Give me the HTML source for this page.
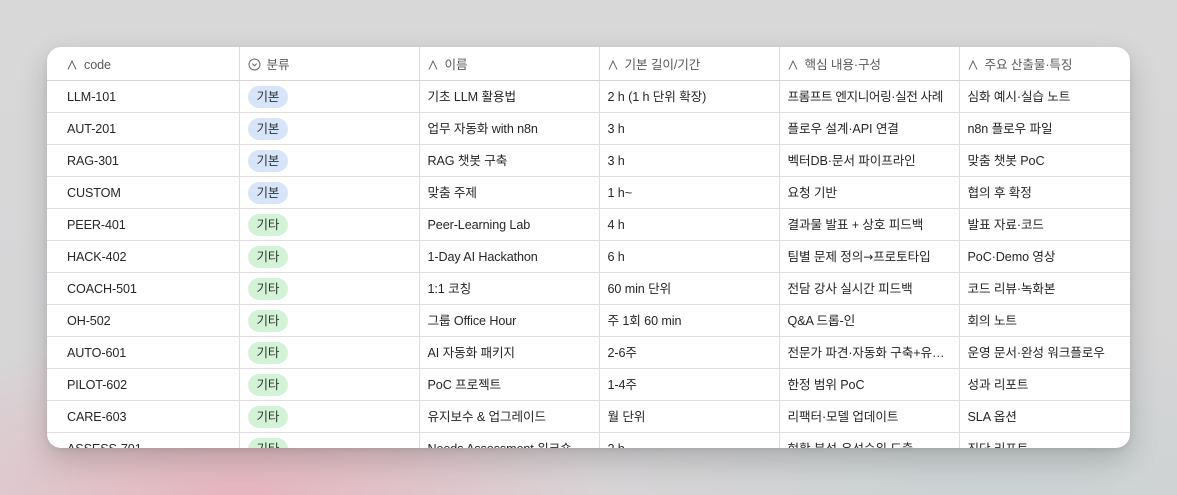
<!DOCTYPE html>
<html><head><meta charset="utf-8">
<style>
html,body{margin:0;padding:0;width:1177px;height:495px;overflow:hidden}
body{background:
 radial-gradient(ellipse 520px 260px at 240px 500px, rgba(236,170,182,.75), rgba(236,170,182,0) 70%),
 radial-gradient(ellipse 600px 260px at 1000px 495px, rgba(200,210,210,.9), rgba(200,210,210,0) 70%),
 linear-gradient(180deg,#d9d8d9 0%,#d6d6d7 60%,#d8d4d6 100%);
 font-family:"Liberation Sans","Noto Sans CJK KR",sans-serif;}
.card{position:absolute;left:47px;top:47px;width:1083px;height:401px;background:#fff;border-radius:14px;overflow:hidden;
 box-shadow:0 12px 30px rgba(0,0,0,.18),0 2px 6px rgba(0,0,0,.08)}
table{border-collapse:collapse;table-layout:fixed;width:1083px}
td,th{height:29px;line-height:29px;padding-top:2px;border-bottom:1px solid #dedede;border-right:1px solid #dedede;font-size:12.6px;color:#262626;
 white-space:nowrap;overflow:hidden;text-overflow:ellipsis;padding-right:7px;padding-left:8px;padding-bottom:0;text-align:left;font-weight:normal;letter-spacing:-0.1px}
th{height:30px;line-height:30px;padding-top:3px;color:#5a5a5a;border-bottom:1px solid #d5d5d5}
td:last-child,th:last-child{border-right:none}
td:first-child,th:first-child{padding-left:20px}
.ic{display:inline-block;vertical-align:-1px;margin-right:7px}
.pill{display:inline-block;vertical-align:middle;height:22px;line-height:22px;padding:0 9px;border-radius:11px;font-size:12.5px;color:#333;margin-top:-1px}
.b{background:#d7e5fb}.g{background:#d2f3d6}
.ar{font-family:"DejaVu Sans",sans-serif;font-size:12px}
</style></head><body>
<div class="card"><table>
<colgroup><col style="width:192px"><col style="width:180px"><col style="width:180px"><col style="width:180px"><col style="width:180px"><col style="width:171px"></colgroup>
<tr><th><svg class="ic" width="10" height="10" viewBox="0 0 10 10"><path d="M1 9.5 5 1 9 9.5" fill="none" stroke="#666" stroke-width="1"/></svg>code</th><th><svg width="13" height="13" viewBox="0 0 13 13" style="vertical-align:-2px;margin-right:6px"><circle cx="6.5" cy="6.5" r="5.5" fill="none" stroke="#666" stroke-width="1"/><path d="M4.3 5.6 6.5 7.8 8.7 5.6" fill="none" stroke="#666" stroke-width="1"/></svg>분류</th><th><svg class="ic" width="10" height="10" viewBox="0 0 10 10"><path d="M1 9.5 5 1 9 9.5" fill="none" stroke="#666" stroke-width="1"/></svg>이름</th><th><svg class="ic" width="10" height="10" viewBox="0 0 10 10"><path d="M1 9.5 5 1 9 9.5" fill="none" stroke="#666" stroke-width="1"/></svg>기본 길이/기간</th><th><svg class="ic" width="10" height="10" viewBox="0 0 10 10"><path d="M1 9.5 5 1 9 9.5" fill="none" stroke="#666" stroke-width="1"/></svg>핵심 내용·구성</th><th><svg class="ic" width="10" height="10" viewBox="0 0 10 10"><path d="M1 9.5 5 1 9 9.5" fill="none" stroke="#666" stroke-width="1"/></svg>주요 산출물·특징</th></tr>
<tr><td>LLM-101</td><td><span class="pill b">기본</span></td><td>기초 LLM 활용법</td><td>2 h (1 h 단위 확장)</td><td style="letter-spacing:-0.4px">프롬프트 엔지니어링·실전 사례</td><td>심화 예시·실습 노트</td></tr>
<tr><td>AUT-201</td><td><span class="pill b">기본</span></td><td>업무 자동화 with n8n</td><td>3 h</td><td>플로우 설계·API 연결</td><td>n8n 플로우 파일</td></tr>
<tr><td>RAG-301</td><td><span class="pill b">기본</span></td><td>RAG 챗봇 구축</td><td>3 h</td><td>벡터DB·문서 파이프라인</td><td>맞춤 챗봇 PoC</td></tr>
<tr><td>CUSTOM</td><td><span class="pill b">기본</span></td><td>맞춤 주제</td><td>1 h~</td><td>요청 기반</td><td>협의 후 확정</td></tr>
<tr><td>PEER-401</td><td><span class="pill g">기타</span></td><td>Peer-Learning Lab</td><td>4 h</td><td>결과물 발표 + 상호 피드백</td><td>발표 자료·코드</td></tr>
<tr><td>HACK-402</td><td><span class="pill g">기타</span></td><td>1-Day AI Hackathon</td><td>6 h</td><td>팀별 문제 정의<span class="ar">→</span>프로토타입</td><td>PoC·Demo 영상</td></tr>
<tr><td>COACH-501</td><td><span class="pill g">기타</span></td><td>1:1 코칭</td><td>60 min 단위</td><td>전담 강사 실시간 피드백</td><td>코드 리뷰·녹화본</td></tr>
<tr><td>OH-502</td><td><span class="pill g">기타</span></td><td>그룹 Office Hour</td><td>주 1회 60 min</td><td>Q&amp;A 드롭-인</td><td>회의 노트</td></tr>
<tr><td>AUTO-601</td><td><span class="pill g">기타</span></td><td>AI 자동화 패키지</td><td>2-6주</td><td>전문가 파견·자동화 구축+유지보수</td><td>운영 문서·완성 워크플로우</td></tr>
<tr><td>PILOT-602</td><td><span class="pill g">기타</span></td><td>PoC 프로젝트</td><td>1-4주</td><td>한정 범위 PoC</td><td>성과 리포트</td></tr>
<tr><td>CARE-603</td><td><span class="pill g">기타</span></td><td>유지보수 &amp; 업그레이드</td><td>월 단위</td><td>리팩터·모델 업데이트</td><td>SLA 옵션</td></tr>
<tr><td>ASSESS-701</td><td><span class="pill g">기타</span></td><td>Needs Assessment 워크숍</td><td>2 h</td><td>현황 분석·우선순위 도출</td><td>진단 리포트</td></tr>
</table></div>
</body></html>
